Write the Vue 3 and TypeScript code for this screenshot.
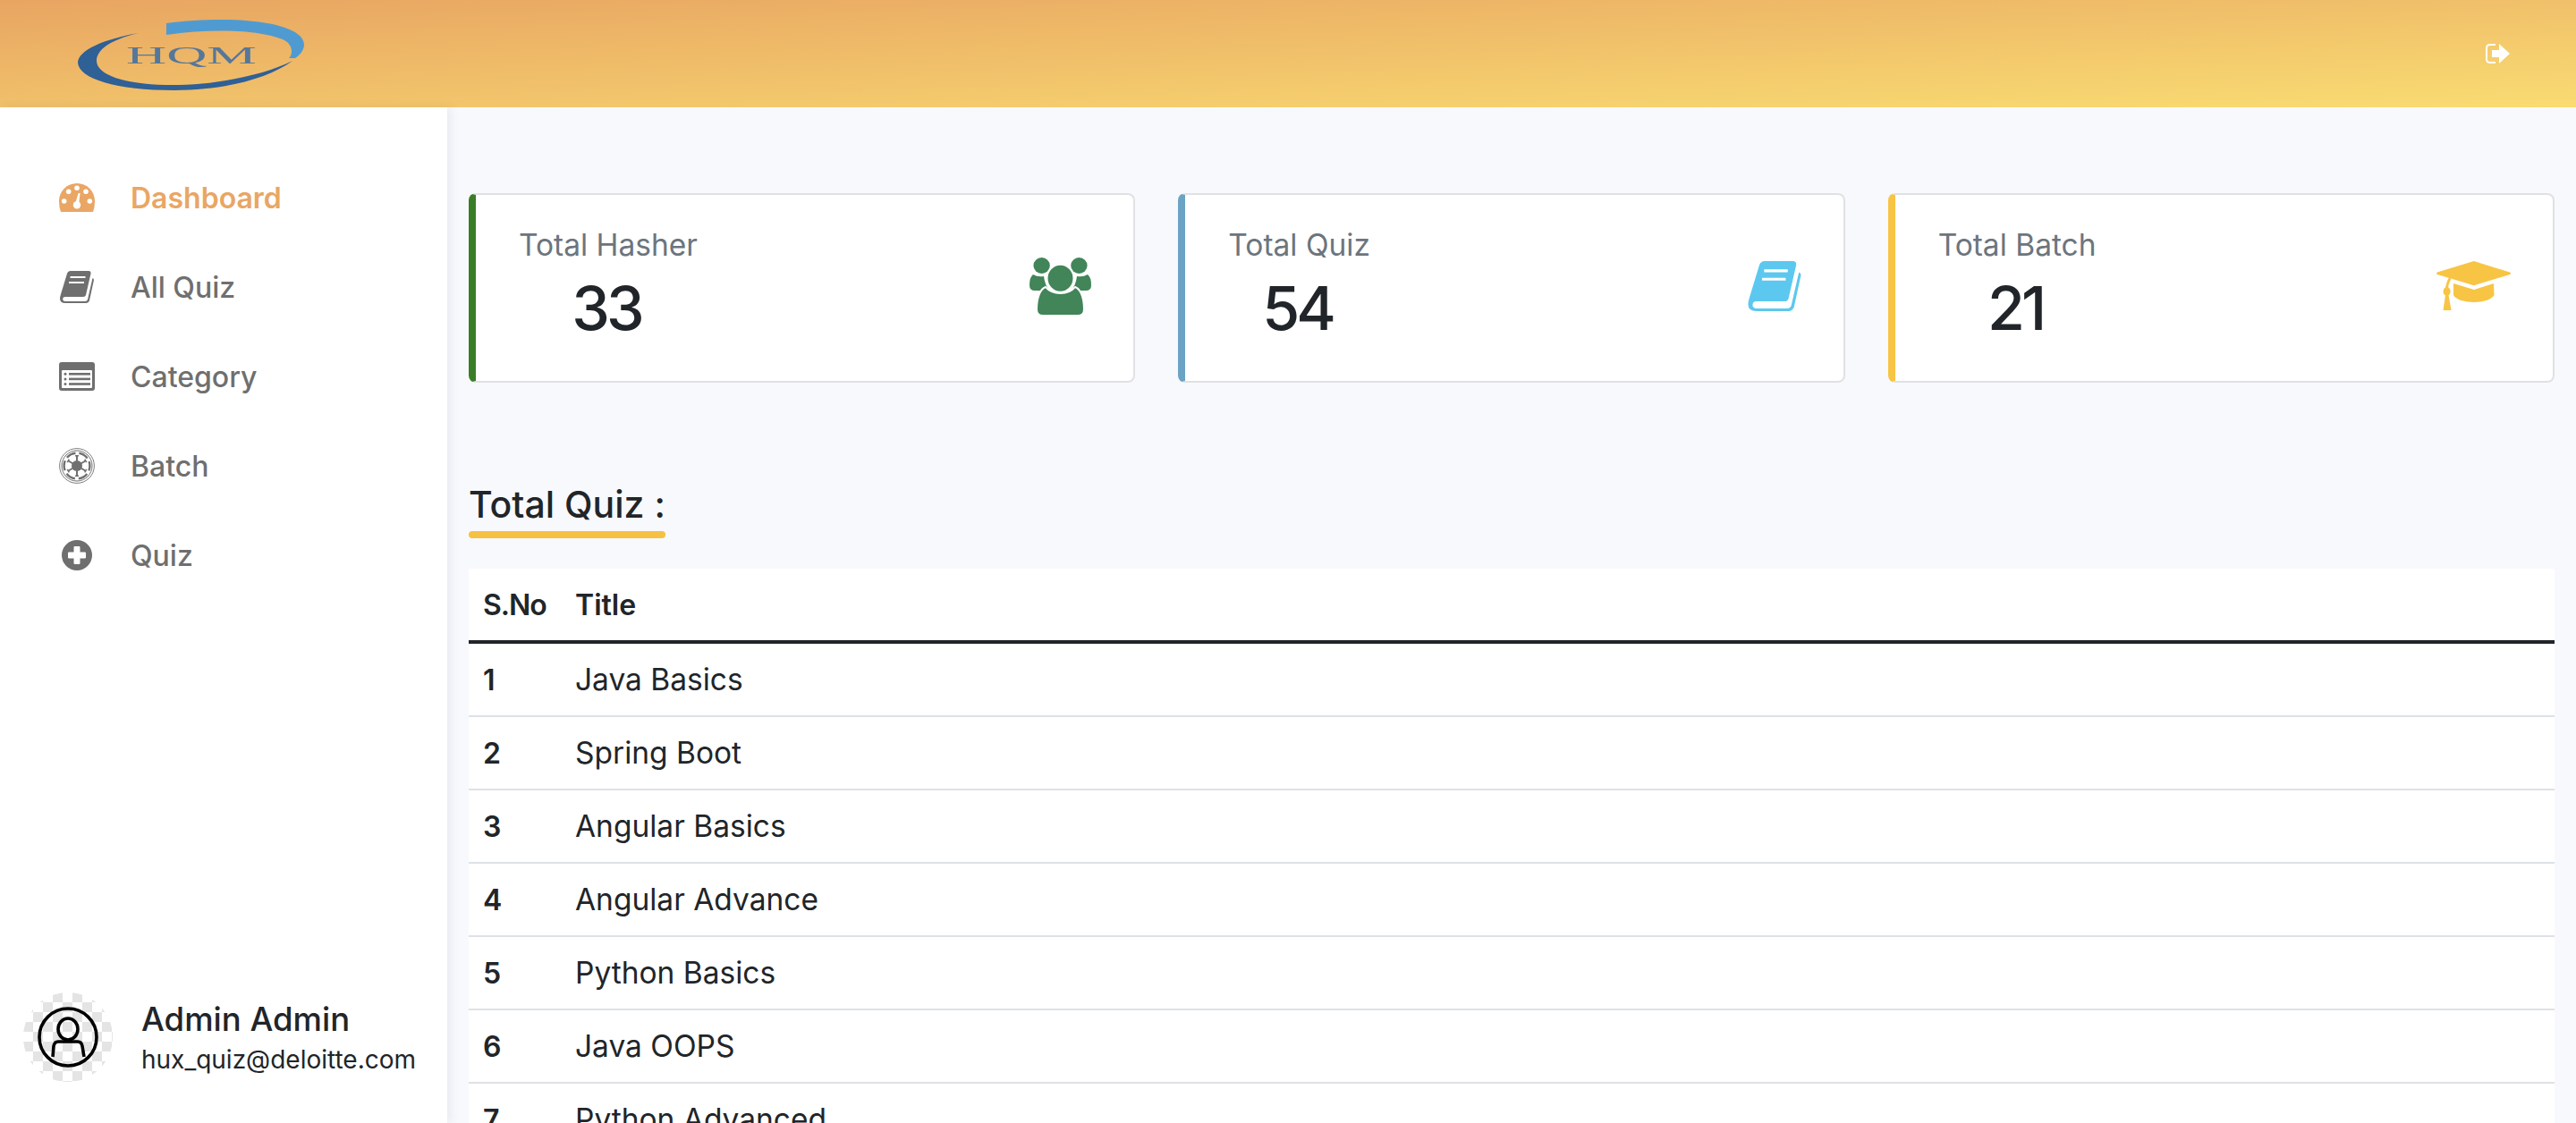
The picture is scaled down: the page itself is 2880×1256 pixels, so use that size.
<script setup lang="ts">
interface NavItem { label: string; icon: string; active?: boolean }
const navItems: NavItem[] = [
  { label: 'Dashboard', icon: 'gauge', active: true },
  { label: 'All Quiz', icon: 'book' },
  { label: 'Category', icon: 'list' },
  { label: 'Batch', icon: 'empire' },
  { label: 'Quiz', icon: 'plus' },
]
const quizzes: string[] = ['Java Basics', 'Spring Boot', 'Angular Basics', 'Angular Advance', 'Python Basics', 'Java OOPS', 'Python Advanced']
const bookPath = 'M12 0H32Q35 0 34.5 3L29 27Q28.5 29 26 29H6Q3 29 3.2 32Q3.5 34 6 34H28Q30.5 34 31 32L36.5 8Q37.8 8.5 38 10L33 33Q32 36 29 36H6Q0 36 0 31Q0 29 1 26L8 3Q9 0 12 0Z'
const spokes: number[] = [0, 60, 120, 180, 240, 300]
</script>

<template>
  <div class="page">
    <header class="topbar">
      <svg class="logo" width="270" height="90" viewBox="80 18 270 90" aria-label="HQM">
        <path fill="#2f6096" d="M155 37C115 44 88 56 87 70C88 88 130 101 195 101C250 101 300 88 327 68C295 84 240 96 185 95C140 94 108 84 108 68C108 55 125 44 155 37Z" />
        <path fill="#4f9bd1" d="M186 26C215 22 250 21 275 23C315 26 340 36 340 50C340 56 335 62 330 65L323 65C328 60 327 50 318 45C295 34 240 31 186 39Z" />
        <text x="141" y="71" textLength="146" lengthAdjust="spacingAndGlyphs" class="logo-text">HQM</text>
      </svg>
      <svg class="logout" width="27" height="22" viewBox="0 0 27 22">
        <path d="M11 1H5Q1 1 1 5V17Q1 21 5 21H11" fill="none" stroke="#fff" stroke-width="2" />
        <path d="M7 7H15V0L27 11L15 22V15H7Z" fill="#fff" />
      </svg>
    </header>

    <div class="body">
      <aside class="sidebar">
        <nav class="nav">
          <a v-for="item in navItems" :key="item.label" class="nav-item" :class="{ active: item.active }">
            <span class="nav-icon">
              <svg v-if="item.icon === 'gauge'" width="40" height="32" viewBox="0 0 40 32">
                <path fill="currentColor" d="M2 32Q0 27 0 20A20 20 0 0 1 40 20Q40 27 38 32Z" />
                <g fill="#fff">
                  <circle cx="5.7" cy="20" r="2.8" /><circle cx="10.7" cy="9.3" r="2.8" />
                  <circle cx="20" cy="5.3" r="2.8" /><circle cx="30" cy="9.3" r="2.8" />
                  <circle cx="34.3" cy="20" r="2.8" /><circle cx="20" cy="24.3" r="4.2" />
                </g>
                <path d="M18 23L21.6 11H23.6L22 24Z" fill="#fff" />
              </svg>
              <svg v-else-if="item.icon === 'book'" width="38" height="36" viewBox="0 0 38 36">
                <path fill="currentColor" :d="bookPath" />
                <path d="M11.5 7H28.5M10 13H27" stroke="#fff" stroke-width="2" />
              </svg>
              <svg v-else-if="item.icon === 'list'" width="40" height="32" viewBox="0 0 40 32">
                <rect width="40" height="32" rx="3" fill="currentColor" />
                <rect x="3" y="9" width="34" height="20" rx="1" fill="#fff" />
                <g fill="currentColor">
                  <rect x="11" y="12" width="24" height="2.6" /><rect x="11" y="17.6" width="24" height="2.6" /><rect x="11" y="23.2" width="24" height="2.6" />
                  <circle cx="7" cy="13.3" r="1.5" /><circle cx="7" cy="18.9" r="1.5" /><circle cx="7" cy="24.5" r="1.5" />
                </g>
              </svg>
              <svg v-else-if="item.icon === 'empire'" width="40" height="40" viewBox="0 0 40 40">
                <circle cx="20" cy="20" r="19.4" fill="none" stroke="currentColor" stroke-width="0.9" />
                <circle cx="20" cy="20" r="17" fill="none" stroke="currentColor" stroke-width="1" />
                <circle cx="20" cy="20" r="14.4" fill="none" stroke="currentColor" stroke-width="2.4" stroke-dasharray="11 4.08" stroke-dashoffset="5.5" />
                <circle cx="20" cy="20" r="6" fill="currentColor" />
                <g fill="currentColor">
                  <path v-for="a in spokes" :key="a" :transform="`rotate(${a} 20 20)`" d="M19 14.500H21V9.500H22V8H18V9.500H19Z" />
                </g>
              </svg>
              <svg v-else width="34" height="34" viewBox="0 0 34 34">
                <circle cx="17" cy="17" r="17" fill="currentColor" />
                <path d="M14 7.5H20V14H26.5V20H20V26.5H14V20H7.5V14H14Z" fill="#fff" stroke="#fff" stroke-linejoin="round" />
              </svg>
            </span>
            <span class="nav-label">{{ item.label }}</span>
          </a>
        </nav>

        <div class="profile">
          <div class="avatar">
            <svg width="100" height="100" viewBox="0 0 100 100" fill="none" stroke="#000" stroke-width="3.6">
              <circle cx="50" cy="50" r="32" />
              <ellipse cx="50" cy="41" rx="11" ry="12" />
              <path d="M33 72L34 60Q35 55 39 55H61Q65 55 66 60L68 72" />
            </svg>
          </div>
          <div class="profile-text">
            <div class="profile-name">Admin Admin</div>
            <div class="profile-mail">hux_quiz@deloitte.com</div>
          </div>
        </div>
      </aside>

      <main class="main">
        <section class="cards">
          <article class="card green">
            <div class="card-text">
              <div class="card-label">Total Hasher</div>
              <div class="card-value">33</div>
            </div>
            <svg width="69" height="64" viewBox="0 0 69 64" fill="#418558">
              <ellipse cx="13.6" cy="9" rx="9.2" ry="9" /><ellipse cx="55.4" cy="9" rx="9.2" ry="9" />
              <path d="M4 19Q9 22 16 21Q17 30 22 37H6Q0 37 0 31Q0 22 4 19Z" />
              <path d="M65 19Q60 22 53 21Q52 30 47 37H63Q69 37 69 31Q69 22 65 19Z" />
              <g stroke="#fff" stroke-width="2">
                <path d="M15 65Q8 65 8 58C8 45 12 35 18 33C22 38 28 40 34.500 40C41 40 47 38 51 33C57 35 61 45 61 58Q61 65 54 65Z" />
                <ellipse cx="34.500" cy="23.300" rx="15" ry="15.500" />
              </g>
            </svg>
          </article>
          <article class="card blue">
            <div class="card-text">
              <div class="card-label">Total Quiz</div>
              <div class="card-value">54</div>
            </div>
            <svg width="60" height="56" viewBox="0 0 38 36" fill="#5cc8ef">
              <path :d="bookPath" />
              <path d="M11.500 7H28.500M10 13H27" stroke="#fff" stroke-width="2" />
            </svg>
          </article>
          <article class="card yellow">
            <div class="card-text">
              <div class="card-label">Total Batch</div>
              <div class="card-value">21</div>
            </div>
            <svg width="83" height="55" viewBox="0 0 83 55" fill="#f8c444">
              <path d="M41.800 0L82 12.500Q84 13.700 82 15L41.800 27.300L1 15Q-1 13.700 1 12.500Z" />
              <path d="M19 25L42 32L64 25L64.500 38C62 43 52 46 42 46C32 46 21 43 19 38Z" />
              <path d="M16.500 20Q13 26 13 31L10 31Q10.500 24 14 18.500Z" />
              <ellipse cx="11.600" cy="34" rx="4" ry="5" />
              <path d="M10 38H13.500L16.600 55H7.500Z" />
            </svg>
          </article>
        </section>

        <h2 class="section-title">Total Quiz :</h2>

        <table class="quiz-table">
          <thead>
            <tr><th class="col-no">S.No</th><th>Title</th></tr>
          </thead>
          <tbody>
            <tr v-for="(q, i) in quizzes" :key="q">
              <td class="col-no num">{{ i + 1 }}</td>
              <td>{{ q }}</td>
            </tr>
          </tbody>
        </table>
      </main>
    </div>
  </div>
</template>

<style>
html, body { margin: 0; height: 100%; overflow: hidden; background: #f8f9fc; }
</style>

<style scoped>
.page {
  height: 1256px;
  display: flex;
  flex-direction: column;
  overflow: hidden;
  font-family: Inter, "Open Sans", "Liberation Sans", sans-serif;
  color: #212529;
}
.topbar {
  height: 120px;
  flex: none;
  display: flex;
  align-items: center;
  justify-content: space-between;
  padding: 0 74px 0 80px;
  background: linear-gradient(to bottom right, #e8a562, #f9dc72);
}
.logo { filter: blur(0.7px); align-self: flex-start; margin-top: 18px; }
.logo-text { font-family: "Liberation Serif", serif; font-size: 27px; fill: #55779a; }
.body { flex: 1; min-height: 0; display: flex; }
.sidebar {
  width: 500px;
  flex: none;
  background: #fff;
  box-shadow: 4px 0 10px rgba(60, 70, 110, 0.08);
  display: flex;
  flex-direction: column;
  justify-content: space-between;
  position: relative;
}
.nav { padding-top: 51px; display: flex; flex-direction: column; }
.nav-item {
  height: 100px;
  padding-left: 66px;
  display: flex;
  align-items: center;
  gap: 40px;
  color: #6f6f6f;
  font-size: 32px;
  font-weight: 500;
}
.nav-item.active { color: #e9a664; font-weight: 600; }
.nav-icon { width: 40px; height: 40px; display: flex; align-items: center; justify-content: center; flex: none; }
.profile { display: flex; align-items: center; gap: 32px; padding: 0 0 46px 26px; }
.avatar {
  width: 100px;
  height: 100px;
  border-radius: 50%;
  flex: none;
  background: repeating-conic-gradient(#e4e4e4 0 25%, #fff 0 50%) 0 0 / 22px 22px;
}
.avatar svg { display: block; }
.profile-text { display: flex; flex-direction: column; gap: 4px; margin-top: 2px; }
.profile-name { font-size: 36.5px; font-weight: 500; line-height: 44px; }
.profile-mail { font-size: 28px; line-height: 38px; }
.main { flex: 1; min-width: 0; padding: 96px 24px 0; }
.cards { display: grid; grid-template-columns: repeat(3, 1fr); gap: 48px; }
.card {
  height: 212px;
  box-sizing: border-box;
  background: #fff;
  border: 2px solid #e0e1e5;
  border-left-width: 8px;
  border-radius: 8px;
  padding: 0 47px 0 48px;
  display: flex;
  align-items: center;
  justify-content: space-between;
}
.card svg { margin-bottom: 5px; }
.card.green { border-left-color: #3a7d27; }
.card.blue { border-left-color: #6ba3c4; }
.card.yellow { border-left-color: #f8c444; }
.card-text { text-align: center; margin-top: -6px; }
.card-label { font-size: 33.5px; line-height: 44px; color: #6c757d; }
.card-value { font-size: 68px; line-height: 84px; font-weight: 500; margin-top: 6px; letter-spacing: -4px; padding-right: 4px; }
.section-title {
  display: block;
  width: fit-content;
  margin: 106px 0 34px;
  font-size: 41px;
  line-height: 60px;
  font-weight: 500;
}
.section-title::after {
  content: "";
  display: block;
  height: 8px;
  border-radius: 4px;
  background: #f6c142;
}
.quiz-table {
  width: 100%;
  border-collapse: collapse;
  background: #fff;
  font-size: 33.5px;
}
.quiz-table th {
  height: 80px;
  padding: 0 16px;
  text-align: left;
  font-size: 32px;
  font-weight: 600;
  border-bottom: 4px solid #212529;
}
.quiz-table th.col-no { letter-spacing: -1px; }
.quiz-table td {
  height: 80px;
  padding: 0 16px;
  border-bottom: 2px solid #dee2e6;
}
.col-no { width: 71px; }
.num { font-weight: 600; font-size: 32px; }
</style>
